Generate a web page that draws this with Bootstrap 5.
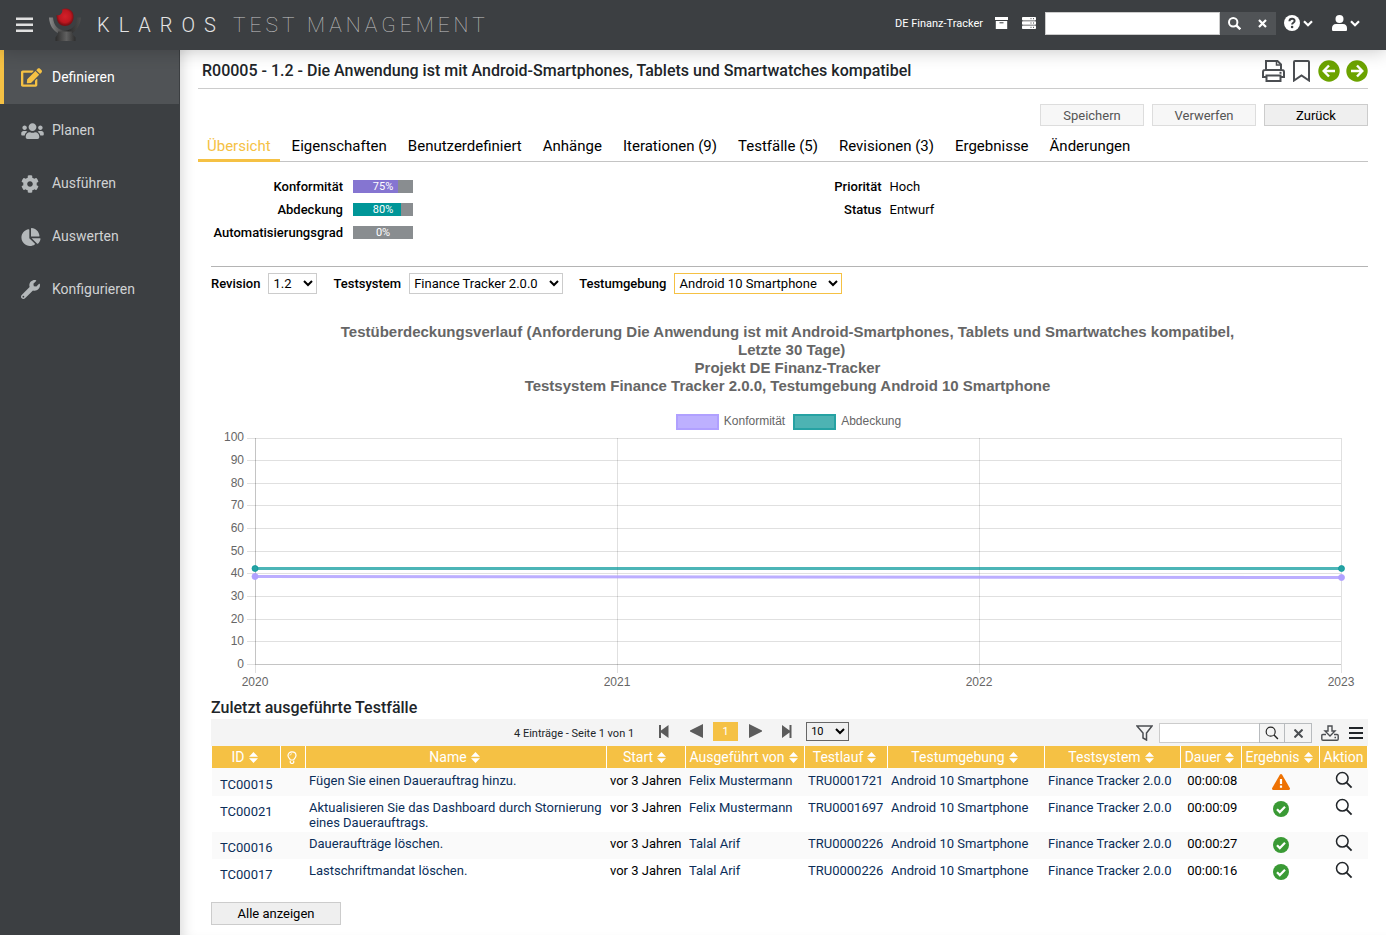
<!DOCTYPE html>
<html lang="de">
<head>
<meta charset="utf-8">
<meta name="viewport" content="width=device-width, initial-scale=1">
<title>Klaros Test Management</title>
<link rel="stylesheet" href="https://cdn.jsdelivr.net/npm/bootstrap@5.3.0/dist/css/bootstrap.min.css">
<style>
  :root { --k-dark: #3c3f42; --k-dark-2: #505356; --k-yellow: #f5c144; --k-link: #0b2e59; }
  body { font-family: Roboto, "Liberation Sans", sans-serif; font-size: 13px; line-height: 15px; color: #000; background: #fff; }
  svg { display: block; flex: none; }
  a { text-decoration: none; color: inherit; }
  .icon-btn { border: 0; background: none; padding: 0; color: inherit; display: flex; align-items: center; }

  .topbar { height: 50px; background: var(--k-dark); color: #fff; padding: 0 26px 0 16px; position: relative; z-index: 2; box-shadow: 0 2px 18px rgba(0,0,0,.2); }
  .brand-main { font-size: 20px; line-height: 24px; font-weight: 300; letter-spacing: 9px; color: #e4e4e4; }
  .brand-sub { font-size: 21px; line-height: 24px; font-weight: 100; letter-spacing: 4px; color: #c4c4c4; }
  .project { font-size: 11px; }
  .top-search input { width: 175px; height: 23px; border: 1px solid #ccc; background: #fff; padding: 0 4px; }
  .top-search button { width: 28px; height: 23px; background: var(--k-dark-2); justify-content: center; }

  .side { width: 180px; background: var(--k-dark); flex: none; }
  .side a { height: 53px; padding-left: 21px; display: flex; align-items: center; font-size: 14px; color: #d0d2d3; }
  .side a svg { color: #b4b8ba; }
  .side .icon-slot { width: 31px; }
  .side a.active { height: 54px; background: var(--k-dark-2); border-left: 4px solid var(--k-yellow); padding-left: 17px; margin-right: 1px; color: #fff; }
  .side a.active svg { color: var(--k-yellow); }

  .page { min-width: 0; padding: 0 18px 9px; box-shadow: inset 12px 0 14px -10px rgba(0,0,0,.16); }
  .page-head { height: 39px; border-bottom: 1px solid #ccc; padding: 3px 0 0 4px; }
  .page-head h1 { font-size: 16px; line-height: 20px; font-weight: 500; color: #212529; }
  .page-head button { color: #4b4e52; }
  .actions { padding-top: 15px; }
  .flat-btn { height: 22px; width: 104px; border: 1px solid #ccc; background: #efefef; color: #000; font-size: 13px; line-height: 15px; padding: 0; }
  .flat-btn:disabled { background: #f7f7f7; border-color: #ddd; color: #555; }
  .flat-btn.wide { width: 130px; height: 23px; }
  .tabs { height: 36px; border-bottom: 1px solid #c4c4c4; gap: 3px; }
  .tabs a { height: 36px; padding: 11px 9px 0; font-size: 15px; line-height: 18px; border-bottom: 3px solid transparent; }
  .tabs a.active { color: var(--k-yellow); border-color: var(--k-yellow); }
  .panel { margin-left: 13px; }
  .facts { min-height: 105px; border-bottom: 1px solid #b4b4b4; padding-top: 13px; }
  .fact { height: 23px; }
  .fact b, .filters label { font-weight: 500; }
  .fact b { width: 132px; text-align: right; }
  .facts .col-6 + .col-6 .fact b { width: 92px; }
  .meter { width: 60px; height: 13px; margin-left: 10px; background: #898d90; color: #fff; font-size: 11px; line-height: 13px; text-align: center; position: relative; }
  .meter i { position: absolute; left: 0; top: 0; bottom: 0; }
  .meter span { position: relative; }
  .filters { padding-top: 6px; }
  .filters select { height: 21px; border: 1px solid #ccc; background: #fff; font-size: 13px; color: #000; padding-right: 8px; }
  .filters select.focus-edge { border-color: var(--k-yellow); }

  .chart { font-family: "Liberation Sans", Arial, sans-serif; color: #666; padding-top: 29px; }
  .chart-head { padding-right: 4px; text-align: center; }
  .chart h2 { font-size: 15px; line-height: 18px; font-weight: 700; margin: 0; }
  .legend { font-size: 12px; line-height: 14px; gap: 8px; padding: 19px 0 0 2px; height: 36px; }
  .legend i { width: 43px; height: 16px; border: 2px solid; margin-right: 5px; }
  .chart svg { width: 100%; height: auto; }
  .chart text { font-size: 12px; fill: #666; }

  .section-title { font-size: 16px; line-height: 20px; font-weight: 500; color: #212529; margin: 0; padding-top: 2px; }
  .pager { height: 27px; background: #f4f4f4; margin-top: 1px; padding: 0 5px 3px 303px; font-size: 11px; color: #333; }
  .pager .arrows { color: #5c5c5c; }
  .pager .page-no { width: 25px; height: 19px; background: var(--k-yellow); color: #fff; font-size: 11px; line-height: 17px; border: 0; padding: 0; }
  .pager select { width: 43px; height: 19px; font-size: 11px; background: #f0f0f0; border: 1px solid #666; color: #000; padding: 0; }
  .pager input { width: 101px; height: 20px; border: 1px solid #ccc; padding: 0 4px; }
  .pager .sq { height: 20px; border: 1px solid #b8bbbe; justify-content: center; background: #f4f4f4; margin-left: -1px; }
  .runs { width: 100%; table-layout: fixed; border-left: 1px solid #fff; border-collapse: separate; border-spacing: 0; }
  .runs th { background: var(--k-yellow); color: #fff; font-size: 14px; font-weight: 400; height: 23px; padding: 0; text-align: center; border-right: 1px solid #fff; border-bottom: 1px solid #fafafa; white-space: nowrap; }
  .runs th span { display: flex; align-items: center; justify-content: center; gap: 4px; padding-right: 3px; }
  .runs td { padding: 4px 0 2px 3px; vertical-align: top; height: 27px; }
  .runs td:first-child { padding: 8px 0 0 8px; }
  .runs td.icon-cell { padding: 5px 1px 0 0; }
  .runs td.icon-cell svg { margin: 0 auto; }
  .runs td.act-cell { padding: 2px 1px 0 0; }
  .runs tbody tr:nth-child(odd) { background: #fafafa; }
  .runs a { color: var(--k-link); }
</style>
</head>
<body class="d-flex flex-column min-vh-100">

<svg width="0" height="0" class="position-absolute" aria-hidden="true">
  <symbol id="chev" viewBox="0 0 10 7"><path d="M1 1.200l4 4 4-4" fill="none" stroke="currentColor" stroke-width="2.200"/></symbol>
  <symbol id="lens" viewBox="0 0 18 18"><circle cx="7.300" cy="7.300" r="5.800" fill="none" stroke="currentColor" stroke-width="1.500"/><path d="M11.600 11.600l5 5" stroke="currentColor" stroke-width="1.800"/></symbol>
  <symbol id="sort" viewBox="0 0 9 11"><path d="M4.500 0L9 4.800H0zM4.500 11L0 6.200h9z" fill="currentColor"/></symbol>
  <symbol id="ok" viewBox="0 0 16 16"><circle cx="8" cy="8" r="8" fill="#3a9a35"/><path d="M4 8.300l2.800 2.800L12 5.800" fill="none" stroke="#fff" stroke-width="2.200"/></symbol>
  <symbol id="arrow" viewBox="0 0 22 22"><circle cx="11" cy="11" r="10.700" fill="#6ca300"/><path d="M5 11h11M11 5.500L16.300 11 11 16.500" fill="none" stroke="#fff" stroke-width="2.400"/></symbol>
</svg>

<header class="topbar d-flex align-items-center">
  <button class="icon-btn" aria-label="Menü"><svg width="17" height="16" viewBox="0 0 17 16" fill="#e0e0e0"><path d="M0 .5h17V3H0zM0 6.500h17V9H0zM0 12.500h17V15H0z"/></svg></button>
  <svg class="ms-3" width="32" height="34" viewBox="0 0 32 34">
    <defs>
      <linearGradient id="cup" x1="0" x2="1"><stop offset="0" stop-color="#8c8c8c"/><stop offset=".3" stop-color="#5a5a5a"/><stop offset=".6" stop-color="#2c2c2c"/><stop offset="1" stop-color="#4c4c4c"/></linearGradient>
      <linearGradient id="foot" x1="0" x2="1"><stop offset="0" stop-color="#2c2c2c"/><stop offset=".55" stop-color="#606060"/><stop offset="1" stop-color="#2e2e2e"/></linearGradient>
      <radialGradient id="ball" cx=".5" cy=".45"><stop offset="0" stop-color="#d3202a"/><stop offset=".7" stop-color="#bd1720"/><stop offset="1" stop-color="#7c1015"/></radialGradient>
    </defs>
    <path d="M0 9.500h4c.5 8 5.500 13 12 13s11.500-5 12-13h4C31.500 17 27 24 22 25.500H10C4 23 .5 17 0 9.500z" fill="url(#cup)"/>
    <path d="M9 23.500h14c-.5 3 2.500 4 3.500 6V33h-20v-3.500c1-2 3-3 2.500-6z" fill="url(#foot)"/>
    <path d="M13 1.500c2-1 5-1.500 7.500 0 3 1.500 4.500 4.500 4 8.500-.5 5-4 8-8.500 8s-7.500-3-8-7l-.5-4c3 1 4.500-.5 5.500-2.500.5-1 .5-2 0-3z" fill="url(#ball)"/>
  </svg>
  <a href="#" class="d-flex ms-3"><span class="brand-main">KLAROS</span><span class="brand-sub ms-2">TEST MANAGEMENT</span></a>
  <div class="d-flex align-items-center ms-auto pb-1">
    <span class="project">DE Finanz-Tracker</span>
    <svg width="13" height="12" viewBox="0 0 13 12" fill="#fff" style="margin-left:12px"><path d="M0 0h13v3H0zM.8 4h11.400v8H.8z"/><path d="M4.500 5.800h4" stroke="#3c3f42"/></svg>
    <svg width="14" height="12" viewBox="0 0 14 12" fill="#fff" style="margin:0 9px 0 14px"><rect width="14" height="3.400" rx=".8"/><rect y="4.300" width="14" height="3.400" rx=".8"/><rect y="8.600" width="14" height="3.400" rx=".8"/><path d="M8.500 1.700h1m1.500 0h1M8.500 6h1m1.500 0h1m-3.500 4.300h1m1.500 0h1" stroke="#3c3f42"/></svg>
    <form class="top-search d-flex" role="search">
      <input type="text" aria-label="Suche">
      <button type="button" class="icon-btn" aria-label="Suchen"><svg width="13" height="13" viewBox="0 0 13 13" fill="none" stroke="#fff" stroke-width="2"><circle cx="5.200" cy="5.200" r="4.200"/><path d="M8.300 8.300l4 4" stroke-width="2.400"/></svg></button>
      <button type="button" class="icon-btn" aria-label="Leeren"><svg width="9" height="9" viewBox="0 0 9 9" stroke="#fff" stroke-width="2.200"><path d="M1 1l7 7M8 1L1 8"/></svg></button>
    </form>
    <button class="icon-btn ms-2" aria-label="Hilfe"><svg width="16" height="16" viewBox="0 0 16 16"><circle cx="8" cy="8" r="8" fill="#fff"/><path d="M5.400 6.200C5.600 2.900 10.700 3 10.600 6c-.1 1.800-2.500 1.800-2.500 3.500" fill="none" stroke="#3c3f42" stroke-width="2"/><circle cx="8.100" cy="12" r="1.300" fill="#3c3f42"/></svg><svg style="margin-left:3px" width="10" height="7"><use href="#chev"/></svg></button>
    <button class="icon-btn" style="margin-left:19px" aria-label="Benutzer"><svg width="15" height="16" viewBox="0 0 15 16" fill="#fff"><circle cx="7.500" cy="4" r="4"/><path d="M4 9h7c2.600 0 4 2 4 4v1.500c0 1-.5 1.500-1.500 1.500h-12C.5 16 0 15.500 0 14.500V13c0-2 1.400-4 4-4z"/></svg><svg style="margin-left:3px" width="10" height="7"><use href="#chev"/></svg></button>
  </div>
</header>

<div class="d-flex flex-grow-1">
  <nav class="side" aria-label="Hauptmenü">
    <a class="active" href="#"><span class="icon-slot"><svg width="21" height="19" viewBox="0 0 576 512" fill="currentColor"><path d="M402.600 83.200l90.200 90.200c3.800 3.800 3.800 10 0 13.800L274.400 405.600l-92.800 10.300c-12.400 1.400-22.900-9.100-21.500-21.500l10.300-92.800L388.800 83.200c3.800-3.800 10-3.800 13.800 0zm162-22.900l-48.800-48.800c-15.200-15.200-39.900-15.200-55.200 0l-35.400 35.400c-3.800 3.800-3.800 10 0 13.800l90.200 90.200c3.800 3.800 10 3.800 13.800 0l35.400-35.400c15.200-15.300 15.200-40 0-55.200zM384 346.200V448H64V128h229.800c3.200 0 6.200-1.300 8.500-3.500l40-40c7.600-7.600 2.200-20.500-8.500-20.500H48C21.500 64 0 85.500 0 112v352c0 26.500 21.500 48 48 48h352c26.500 0 48-21.500 48-48V306.200c0-10.700-12.900-16-20.500-8.500l-40 40c-2.200 2.300-3.500 5.300-3.500 8.500z"/></svg></span>Definieren</a>
    <a href="#"><span class="icon-slot"><svg width="23" height="18" viewBox="0 0 640 512" fill="currentColor"><path d="M96 224c35.300 0 64-28.700 64-64s-28.700-64-64-64-64 28.700-64 64 28.700 64 64 64zm448 0c35.300 0 64-28.700 64-64s-28.700-64-64-64-64 28.700-64 64 28.700 64 64 64zm32 32h-64c-17.600 0-33.500 7.100-45.100 18.600 40.300 22.100 68.900 62 75.100 109.400h66c17.700 0 32-14.300 32-32v-32c0-35.300-28.700-64-64-64zm-256 0c61.900 0 112-50.100 112-112S381.900 32 320 32 208 82.100 208 144s50.100 112 112 112zm76.800 32h-8.300c-20.800 10-43.900 16-68.500 16s-47.600-6-68.500-16h-8.300C179.600 288 128 339.600 128 403.200V432c0 26.500 21.500 48 48 48h288c26.500 0 48-21.500 48-48v-28.800c0-63.600-51.600-115.200-115.200-115.200zm-223.700-13.400C161.500 263.100 145.600 256 128 256H64c-35.300 0-64 28.700-64 64v32c0 17.700 14.300 32 32 32h65.900c6.300-47.400 34.900-87.300 75.200-109.400z"/></svg></span>Planen</a>
    <a href="#"><span class="icon-slot"><svg width="18" height="18" viewBox="0 0 512 512" fill="currentColor"><path d="M487.400 315.700l-42.600-24.600c4.300-23.200 4.300-47 0-70.200l42.600-24.600c4.900-2.800 7.100-8.600 5.500-14-11.100-35.600-30-67.800-54.700-94.600-3.800-4.100-10-5.100-14.800-2.300L380.800 110c-17.900-15.400-38.500-27.300-60.800-35.100V25.800c0-5.600-3.900-10.500-9.400-11.700-36.700-8.200-74.300-7.800-109.200 0-5.500 1.200-9.400 6.100-9.400 11.700V75c-22.200 7.900-42.800 19.800-60.800 35.100L88.700 85.500c-4.900-2.800-11-1.900-14.800 2.300-24.700 26.700-43.600 58.900-54.700 94.600-1.700 5.400.6 11.200 5.500 14L67.300 221c-4.300 23.200-4.300 47 0 70.200l-42.600 24.600c-4.900 2.800-7.100 8.600-5.500 14 11.100 35.600 30 67.800 54.700 94.600 3.800 4.100 10 5.100 14.800 2.300l42.600-24.600c17.900 15.400 38.500 27.300 60.800 35.100v49.200c0 5.600 3.900 10.500 9.400 11.700 36.700 8.200 74.300 7.800 109.200 0 5.500-1.200 9.400-6.100 9.400-11.700v-49.200c22.200-7.900 42.800-19.800 60.800-35.100l42.600 24.600c4.900 2.800 11 1.900 14.800-2.300 24.700-26.700 43.600-58.900 54.700-94.600 1.500-5.500-.7-11.300-5.600-14.100zM256 336c-44.100 0-80-35.900-80-80s35.900-80 80-80 80 35.900 80 80-35.900 80-80 80z"/></svg></span>Ausführen</a>
    <a href="#"><span class="icon-slot"><svg width="20" height="18" viewBox="0 0 544 512" fill="currentColor"><path d="M527.790 288H290.500l158.030 158.030c6.040 6.040 15.980 6.530 22.190.68 38.700-36.460 65.320-85.610 73.130-140.860 1.340-9.460-6.510-17.850-16.060-17.850zm-15.830-64.800C503.720 103.740 408.260 8.280 288.800.04 279.680-.59 272 7.100 272 16.240V240h223.770c9.140 0 16.820-7.680 16.190-16.800zM224 288V50.710c0-9.550-8.390-17.400-17.840-16.060C86.990 51.490-4.100 155.600.14 280.370 4.500 408.510 114.830 513.590 243.030 511.980c50.400-.63 96.970-16.870 135.260-44.030 7.900-5.600 8.420-17.230 1.570-24.080L224 288z"/></svg></span>Auswerten</a>
    <a href="#"><span class="icon-slot"><svg width="19" height="19" viewBox="0 0 512 512" fill="currentColor"><path d="M507.730 109.100c-2.240-9.030-13.540-12.090-20.120-5.510l-74.360 74.360-67.880-11.310-11.310-67.880 74.360-74.360c6.620-6.620 3.430-17.900-5.660-20.160-47.380-11.740-99.550.91-136.580 37.930-39.640 39.640-50.550 97.100-34.050 147.200L18.740 402.760c-24.990 24.990-24.990 65.510 0 90.500 24.990 24.990 65.510 24.990 90.500 0l213.210-213.210c50.120 16.710 107.470 5.680 147.370-34.220 37.070-37.070 49.700-89.320 37.910-136.730zM64 472c-13.250 0-24-10.750-24-24 0-13.260 10.750-24 24-24s24 10.740 24 24c0 13.250-10.750 24-24 24z"/></svg></span>Konfigurieren</a>
  </nav>

  <main class="page flex-grow-1">
    <div class="page-head d-flex align-items-center justify-content-between">
      <h1 class="m-0">R00005 - 1.2 - Die Anwendung ist mit Android-Smartphones, Tablets und Smartwatches kompatibel</h1>
      <div class="d-flex align-items-center gap-2">
        <button class="icon-btn" aria-label="Drucken"><svg width="23" height="22" viewBox="0 0 23 22" fill="none" stroke="currentColor" stroke-width="2"><path d="M4 10V1h11.500L19 4.500V10M4 17H1v-5c0-1.500 1-2 2-2h17c1 0 2 .5 2 2v5h-3M4.500 15.500h14V21h-14z"/><path d="M14.500 1v4H19" stroke-width="1.500"/><path d="M17.500 12.800h2"/></svg></button>
        <button class="icon-btn" aria-label="Merken"><svg width="17" height="22" viewBox="0 0 17 22" fill="none" stroke="currentColor" stroke-width="2"><path d="M1 20.500V2c0-.6.400-1 1-1h13c.6 0 1 .4 1 1v18.500l-7.500-5z"/></svg></button>
        <div class="d-flex" style="gap:6px">
          <button class="icon-btn" aria-label="Vorherige"><svg width="22" height="22" viewBox="0 0 22 22"><use href="#arrow" transform="rotate(180 11 11)"/></svg></button>
          <button class="icon-btn" aria-label="Nächste"><svg width="22" height="22" viewBox="0 0 22 22"><use href="#arrow"/></svg></button>
        </div>
      </div>
    </div>
    <div class="actions d-flex justify-content-end gap-2">
      <button class="flat-btn" disabled>Speichern</button>
      <button class="flat-btn" disabled>Verwerfen</button>
      <button class="flat-btn">Zurück</button>
    </div>
    <nav class="tabs d-flex" aria-label="Register">
      <a class="active" href="#">Übersicht</a><a href="#">Eigenschaften</a><a href="#">Benutzerdefiniert</a><a href="#">Anhänge</a><a href="#">Iterationen (9)</a><a href="#">Testfälle (5)</a><a href="#">Revisionen (3)</a><a href="#">Ergebnisse</a><a href="#">Änderungen</a>
    </nav>

    <div class="panel">
      <section class="facts row g-0">
        <div class="col-6">
          <div class="fact d-flex align-items-center"><b>Konformität</b><div class="meter"><i style="width:75%;background:#8575d1"></i><span>75%</span></div></div>
          <div class="fact d-flex align-items-center"><b>Abdeckung</b><div class="meter"><i style="width:80%;background:#009698"></i><span>80%</span></div></div>
          <div class="fact d-flex align-items-center"><b>Automatisierungsgrad</b><div class="meter"><span>0%</span></div></div>
        </div>
        <div class="col-6">
          <div class="fact d-flex align-items-center gap-2"><b>Priorität</b><span>Hoch</span></div>
          <div class="fact d-flex align-items-center gap-2"><b>Status</b><span>Entwurf</span></div>
        </div>
      </section>

      <form class="filters d-flex gap-3 align-items-center">
        <div class="d-flex align-items-center gap-2"><label for="rev">Revision</label><select id="rev"><option>1.2</option></select></div>
        <div class="d-flex align-items-center gap-2"><label for="sys">Testsystem</label><select id="sys"><option>Finance Tracker 2.0.0</option></select></div>
        <div class="d-flex align-items-center gap-2"><label for="env">Testumgebung</label><select id="env" class="focus-edge"><option>Android 10 Smartphone</option></select></div>
      </form>

      <section class="chart">
        <div class="chart-head">
          <h2>Testüberdeckungsverlauf (Anforderung Die Anwendung ist mit Android-Smartphones, Tablets und Smartwatches kompatibel,<br>&nbsp;&nbsp;Letzte 30 Tage)<br>Projekt DE Finanz-Tracker<br>Testsystem Finance Tracker 2.0.0, Testumgebung Android 10 Smartphone</h2>
          <div class="legend d-flex justify-content-center">
            <span class="d-flex"><i style="background:#bdb0ff;border-color:#b0a0ff"></i>Konformität</span>
            <span class="d-flex"><i style="background:#4db3b3;border-color:#26a2a3"></i>Abdeckung</span>
          </div>
        </div>
        <svg viewBox="0 0 1157 265" role="img" aria-label="Verlauf von Konformität und Abdeckung">
          <g stroke="#000" stroke-opacity=".12">
            <path d="M36 7.500h1094M36 29.500h1094M36 52.500h1094M36 74.500h1094M36 97.500h1094M36 120.500h1094M36 142.500h1094M36 165.500h1094M36 188.500h1094M36 210.500h1094M36 233.500h1094"/>
            <path d="M44.500 7v235M406.500 7v235M768.500 7v235M1130.500 7v235M44.500 7v226M44 233.500h1086"/>
          </g>
          <g text-anchor="end">
            <text x="33" y="10">100</text><text x="33" y="33">90</text><text x="33" y="56">80</text><text x="33" y="78">70</text><text x="33" y="101">60</text><text x="33" y="124">50</text><text x="33" y="146">40</text><text x="33" y="169">30</text><text x="33" y="192">20</text><text x="33" y="214">10</text><text x="33" y="237">0</text>
          </g>
          <g text-anchor="middle">
            <text x="44" y="255">2020</text><text x="406" y="255">2021</text><text x="768" y="255">2022</text><text x="1130" y="255">2023</text>
          </g>
          <g stroke="#b0a0ff" stroke-opacity=".85" fill="#b0a0ff" stroke-width="3"><path d="M44 145.500L1130 146.500"/><circle cx="44" cy="145.500" r="3" stroke-width="1"/><circle cx="1130.500" cy="146.500" r="3" stroke-width="1"/></g>
          <g stroke="#009698" stroke-opacity=".7" fill="#26a2a3" stroke-width="3"><path d="M44 137.500h1086"/><circle cx="44" cy="137.500" r="3" stroke-width="1"/><circle cx="1130.500" cy="137.500" r="3" stroke-width="1"/></g>
        </svg>
      </section>

      <h2 class="section-title">Zuletzt ausgeführte Testfälle</h2>
      <div class="pager d-flex align-items-center justify-content-between">
        <div class="arrows d-flex align-items-center">
          <span class="text-body pt-1">4 Einträge - Seite 1 von 1</span>
          <button class="icon-btn" style="margin-left:25px" aria-label="Erste Seite"><svg width="10" height="13" viewBox="0 0 10 13" fill="currentColor"><path d="M0 0h2v5.500L9.500 0v13L2 7.500V13H0z"/></svg></button>
          <button class="icon-btn" style="margin-left:21px" aria-label="Vorherige Seite"><svg width="13" height="14" viewBox="0 0 13 14" fill="currentColor"><path d="M13 0v14L0 7.500v-1z"/></svg></button>
          <button class="page-no" style="margin:0 11px 0 10px">1</button>
          <button class="icon-btn" aria-label="Nächste Seite"><svg width="13" height="14" viewBox="0 0 13 14" fill="currentColor"><path d="M0 0v14l13-6.500v-1z"/></svg></button>
          <button class="icon-btn" style="margin:0 14px 0 20px" aria-label="Letzte Seite"><svg width="10" height="13" viewBox="0 0 10 13" fill="currentColor"><path d="M9.500 0h-2v5.500L0 0v13l7.500-5.500V13h2z"/></svg></button>
          <select aria-label="Einträge pro Seite"><option>10</option></select>
        </div>
        <div class="d-flex align-items-center pt-1" style="color:#4b4e52">
          <button class="icon-btn" aria-label="Filter"><svg width="17" height="16" viewBox="0 0 17 16" fill="none" stroke="currentColor" stroke-width="1.500"><path d="M1 1h15l-5.500 7v7L7 13V8z"/></svg></button>
          <input style="margin-left:6px" type="text" aria-label="Tabelle durchsuchen">
          <button class="icon-btn sq" style="width:26px;color:#222" aria-label="Suchen"><svg width="14" height="14"><use href="#lens"/></svg></button>
          <button class="icon-btn sq" style="width:28px" aria-label="Leeren"><svg width="9" height="9" viewBox="0 0 9 9" stroke="currentColor" stroke-width="2"><path d="M.5.5l8 8M8.500.5l-8 8"/></svg></button>
          <button class="icon-btn" style="margin:0 10px 0 9px" aria-label="Exportieren"><svg width="18" height="16" viewBox="0 0 18 16" fill="none" stroke="currentColor" stroke-width="1.400"><path d="M7 1h4v5h3L9 11 4 6h3z"/><path d="M5 9.500H2c-1 0-1.200.5-1.200 1V14c0 .7.400 1.200 1.200 1.200h14c.8 0 1.200-.5 1.200-1.200v-3.500c0-.5-.2-1-1.200-1h-3M13.500 12.500h1.500"/></svg></button>
          <button class="icon-btn" aria-label="Spalten"><svg width="14" height="12" viewBox="0 0 14 12" fill="#212529"><path d="M0 0h14v2H0zM0 5h14v2H0zM0 10h14v2H0z"/></svg></button>
        </div>
      </div>

      <table class="runs">
        <colgroup><col style="width:69px"><col style="width:25px"><col><col style="width:79px"><col style="width:119px"><col style="width:83px"><col style="width:157px"><col style="width:136px"><col style="width:61px"><col style="width:78px"><col style="width:48px"></colgroup>
        <thead>
          <tr>
            <th><span>ID<svg width="9" height="11"><use href="#sort"/></svg></span></th>
            <th><span><svg width="10" height="13" viewBox="0 0 10 13" fill="none" stroke="#fff" stroke-width="1.200"><path d="M3.300 9C3 7.500 1 6.800 1 4.500 1 2.300 2.800.8 5 .8s4 1.500 4 3.700C9 6.800 7 7.500 6.700 9zM3.300 10v1.500l1 1h1.400l1-1V10"/><path d="M3 4.500c0-1 .8-1.700 2-1.700" stroke-width=".8"/></svg></span></th>
            <th><span>Name<svg width="9" height="11"><use href="#sort"/></svg></span></th>
            <th><span>Start<svg width="9" height="11"><use href="#sort"/></svg></span></th>
            <th><span>Ausgeführt von<svg width="9" height="11"><use href="#sort"/></svg></span></th>
            <th><span>Testlauf<svg width="9" height="11"><use href="#sort"/></svg></span></th>
            <th><span>Testumgebung<svg width="9" height="11"><use href="#sort"/></svg></span></th>
            <th><span>Testsystem<svg width="9" height="11"><use href="#sort"/></svg></span></th>
            <th><span>Dauer<svg width="9" height="11"><use href="#sort"/></svg></span></th>
            <th><span>Ergebnis<svg width="9" height="11"><use href="#sort"/></svg></span></th>
            <th>Aktion</th>
          </tr>
        </thead>
        <tbody>
          <tr><td><a href="#">TC00015</a></td><td></td><td><a href="#">Fügen Sie einen Dauerauftrag hinzu.</a></td><td>vor 3 Jahren</td><td><a href="#">Felix Mustermann</a></td><td><a href="#">TRU0001721</a></td><td><a href="#">Android 10 Smartphone</a></td><td><a href="#">Finance Tracker 2.0.0</a></td><td>&nbsp;00:00:08</td><td class="icon-cell"><svg width="18" height="16" viewBox="0 0 18 16"><path d="M8 .6c.5-.8 1.500-.8 2 0l7.800 13.500c.5.900 0 1.900-1 1.900H1.200c-1 0-1.500-1-1-1.900z" fill="#ee7203"/><path d="M9 5v5M9 11.500v2.300" stroke="#fff" stroke-width="2.200"/></svg></td><td class="icon-cell act-cell"><a href="#" aria-label="Anzeigen" class="text-dark"><svg width="18" height="18"><use href="#lens"/></svg></a></td></tr>
          <tr><td><a href="#">TC00021</a></td><td></td><td><a href="#">Aktualisieren Sie das Dashboard durch Stornierung eines Dauerauftrags.</a></td><td>vor 3 Jahren</td><td><a href="#">Felix Mustermann</a></td><td><a href="#">TRU0001697</a></td><td><a href="#">Android 10 Smartphone</a></td><td><a href="#">Finance Tracker 2.0.0</a></td><td>&nbsp;00:00:09</td><td class="icon-cell"><svg width="16" height="16"><use href="#ok"/></svg></td><td class="icon-cell act-cell"><a href="#" aria-label="Anzeigen" class="text-dark"><svg width="18" height="18"><use href="#lens"/></svg></a></td></tr>
          <tr><td><a href="#">TC00016</a></td><td></td><td><a href="#">Daueraufträge löschen.</a></td><td>vor 3 Jahren</td><td><a href="#">Talal Arif</a></td><td><a href="#">TRU0000226</a></td><td><a href="#">Android 10 Smartphone</a></td><td><a href="#">Finance Tracker 2.0.0</a></td><td>&nbsp;00:00:27</td><td class="icon-cell"><svg width="16" height="16"><use href="#ok"/></svg></td><td class="icon-cell act-cell"><a href="#" aria-label="Anzeigen" class="text-dark"><svg width="18" height="18"><use href="#lens"/></svg></a></td></tr>
          <tr><td><a href="#">TC00017</a></td><td></td><td><a href="#">Lastschriftmandat löschen.</a></td><td>vor 3 Jahren</td><td><a href="#">Talal Arif</a></td><td><a href="#">TRU0000226</a></td><td><a href="#">Android 10 Smartphone</a></td><td><a href="#">Finance Tracker 2.0.0</a></td><td>&nbsp;00:00:16</td><td class="icon-cell"><svg width="16" height="16"><use href="#ok"/></svg></td><td class="icon-cell act-cell"><a href="#" aria-label="Anzeigen" class="text-dark"><svg width="18" height="18"><use href="#lens"/></svg></a></td></tr>
        </tbody>
      </table>
      <button class="flat-btn wide mt-3">Alle anzeigen</button>
    </div>
  </main>
</div>
<script src="https://cdn.jsdelivr.net/npm/bootstrap@5.3.0/dist/js/bootstrap.bundle.min.js"></script>
</body>
</html>
